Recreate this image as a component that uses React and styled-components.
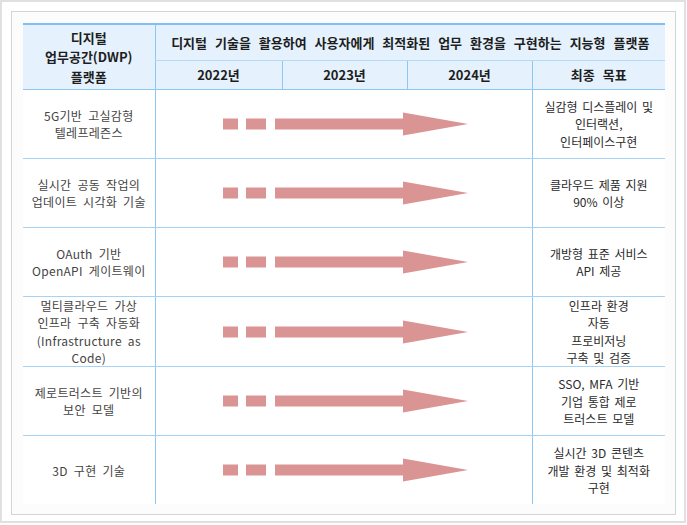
import React from "react";
import styled, { createGlobalStyle } from "styled-components";

const GlobalStyle = createGlobalStyle`
  body {
    margin: 0;
    background: #fff;
    font-family: "Noto Sans CJK KR", "Noto Sans", sans-serif;
  }
`;

const rows = [
  {
    topic: ["5G기반 고실감형", "텔레프레즌스"],
    goal: ["실감형 디스플레이 및", "인터랙션,", "인터페이스구현"]
  },
  {
    topic: ["실시간 공동 작업의", "업데이트 시각화 기술"],
    goal: ["클라우드 제품 지원", "90% 이상"]
  },
  {
    topic: ["OAuth 기반", "OpenAPI 게이트웨이"],
    goal: ["개방형 표준 서비스", "API 제공"]
  },
  {
    topic: ["멀티클라우드 가상", "인프라 구축 자동화", "(Infrastructure as", "Code)"],
    goal: ["인프라 환경", "자동", "프로비저닝", "구축 및 검증"]
  },
  {
    topic: ["제로트러스트 기반의", "보안 모델"],
    goal: ["SSO, MFA 기반", "기업 통합 제로", "트러스트 모델"]
  },
  {
    topic: ["3D 구현 기술"],
    goal: ["실시간 3D 콘텐츠", "개발 환경 및 최적화", "구현"]
  }
];

const Frame = styled.div`
  box-sizing: border-box;
  width: 686px;
  height: 523px;
  border: 2px solid #e0e0e0;
  padding: 9px;
`;

const Sheet = styled.div`
  box-sizing: border-box;
  width: 665px;
  height: 504px;
  border: 1px solid #d4d4d4;
  background: #fcfcfc;
  padding: 11px 9px 0 11px;
`;

const Table = styled.table`
  width: 642px;
  table-layout: fixed;
  border-collapse: collapse;
  background: #fff;
  border-top: 2px solid #7fbff3;
`;

const HeadCell = styled.th`
  background: #e5f2fd;
  color: #1e1e1e;
  font-size: 13px;
  font-weight: 700;
  line-height: 19.5px;
  word-spacing: ${p => (p.$wide ? 5 : 2)}px;
  text-align: center;
  padding: 0;
  height: ${p => p.$h}px;
  border-left: ${p => (p.$first ? "none" : "1px solid #8fc7f4")};
  border-bottom: 1px solid ${p => (p.$light ? "#b3daf7" : "#8fc7f4")};
`;

const Cell = styled.td`
  font-size: 12px;
  line-height: 17.3px;
  color: ${p => (p.$dim ? "#444" : "#2b2b2b")};
  word-spacing: ${p => (p.$dim ? 3 : 2)}px;
  letter-spacing: ${p => (p.$dim ? 0.3 : 0)}px;
  text-align: center;
  vertical-align: middle;
  padding: 0;
  height: 68px;
  border-left: ${p => (p.$first ? "none" : "1px solid #8fc7f4")};
  border-bottom: ${p => (p.$last ? "none" : "1px solid #a5d2f5")};
`;

const Line = styled.div`
  white-space: nowrap;
`;

const ArrowWrap = styled.div`
  display: flex;
  justify-content: center;
  padding-left: 4px;
`;

const Arrow = () => (
  <svg width="245" height="24" viewBox="0 0 245 24">
    <g fill="#db9494">
      <rect x="0" y="6.5" width="15" height="11" />
      <rect x="23" y="6.5" width="20" height="11" />
      <rect x="52" y="6.5" width="129" height="11" />
      <polygon points="180,0.5 245,12 180,23.5" />
    </g>
  </svg>
);

const Lines = ({ items }) => items.map(t => <Line key={t}>{t}</Line>);

export default function App() {
  return (
    <>
      <GlobalStyle />
      <Frame>
        <Sheet>
          <Table>
            <colgroup>
              <col style={{ width: 132 }} />
              <col style={{ width: 127 }} />
              <col style={{ width: 125 }} />
              <col style={{ width: 125 }} />
              <col style={{ width: 133 }} />
            </colgroup>
            <thead>
              <tr>
                <HeadCell rowSpan={2} $first $h={35}>
                  <Line>디지털</Line>
                  <Line>업무공간(DWP)</Line>
                  <Line>플랫폼</Line>
                </HeadCell>
                <HeadCell colSpan={4} $light $wide $h={35}>
                  디지털 기술을 활용하여 사용자에게 최적화된 업무 환경을 구현하는 지능형 플랫폼
                </HeadCell>
              </tr>
              <tr>
                <HeadCell $h={28}>2022년</HeadCell>
                <HeadCell $h={28}>2023년</HeadCell>
                <HeadCell $h={28}>2024년</HeadCell>
                <HeadCell $h={28} $wide>최종 목표</HeadCell>
              </tr>
            </thead>
            <tbody>
              {rows.map((r, i) => (
                <tr key={i}>
                  <Cell $first $dim $last={i === rows.length - 1}>
                    <Lines items={r.topic} />
                  </Cell>
                  <Cell colSpan={3} $last={i === rows.length - 1}>
                    <ArrowWrap>
                      <Arrow />
                    </ArrowWrap>
                  </Cell>
                  <Cell $last={i === rows.length - 1}>
                    <Lines items={r.goal} />
                  </Cell>
                </tr>
              ))}
            </tbody>
          </Table>
        </Sheet>
      </Frame>
    </>
  );
}
